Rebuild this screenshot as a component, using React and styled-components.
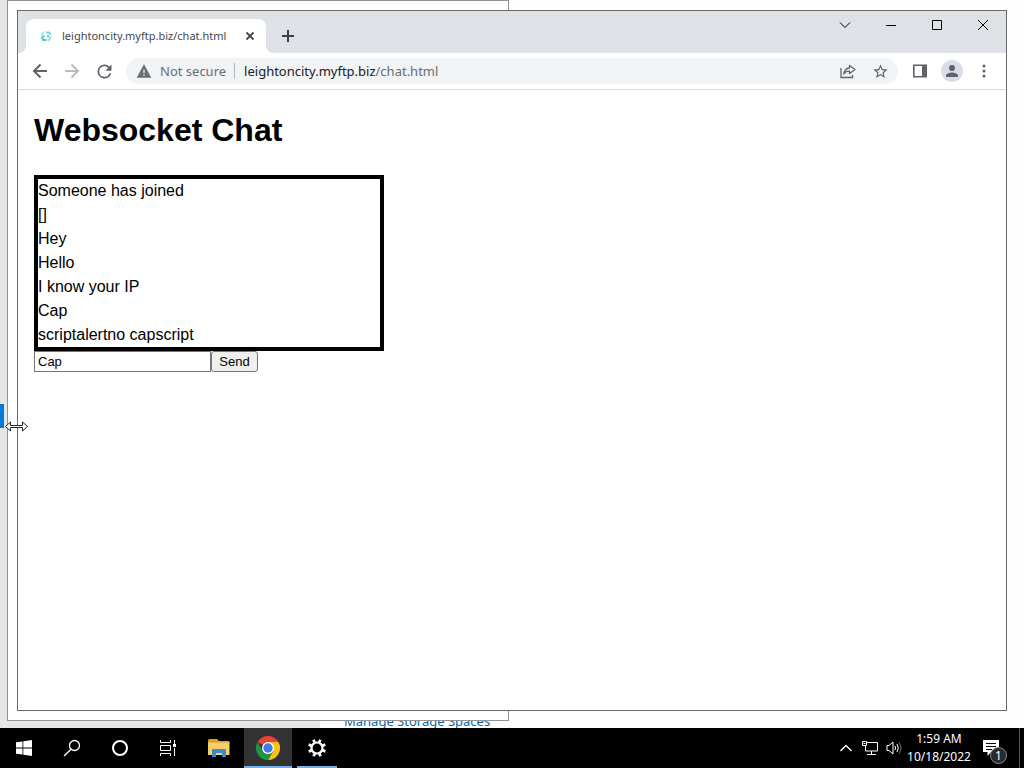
import { useState } from "react";
import styled, { createGlobalStyle } from "styled-components";

const GlobalStyle = createGlobalStyle`
    * {
        box-sizing: border-box;
    }

    body {
        margin: 0;
        overflow: hidden;
        font-family: "Noto Sans", "Open Sans", sans-serif;
    }

    button {
        font-family: inherit;
        border: none;
        padding: 0;
        background: none;
        color: inherit;
    }

    svg {
        display: block;
        flex: none;
    }
`

const Desktop = styled.div`
    height: 100vh;
    display: flex;
    flex-direction: column;
`

const Workspace = styled.div`
    position: relative;
    flex: 1;
    min-height: 0;
    overflow: hidden;
    display: flex;
`

/* storage settings, maximised behind everything else */
const SettingsNav = styled.div`
    width: 320px;
    flex: none;
    background-color: #e6e6e6;
    display: flex;
    align-items: end;
    padding-bottom: 300px;
`

const NavMarker = styled.div`
    width: 4px;
    height: 24px;
    background-color: #0078d7;
`

const SettingsBody = styled.div`
    flex: 1;
    background-color: #fefefe;
    display: flex;
    align-items: end;
    padding: 0 24px;

    a {
        color: #0067b3;
        font-size: 13px;
        line-height: 14px;
        text-decoration: none;
    }
`

const GhostWindow = styled.div`
    position: absolute;
    left: 7px;
    top: 0;
    bottom: 7px;
    width: 502px;
    border: 1px solid #939393;
    background-color: #fff;
`

const BrowserWindow = styled.div`
    position: absolute;
    left: 17px;
    top: 10px;
    right: 17px;
    bottom: 17px;
    border: 1px solid #6b6b6b;
    background-color: #fff;
    display: flex;
    flex-direction: column;
`

const TabStrip = styled.div`
    height: 42px;
    flex: none;
    display: flex;
    align-items: end;
    padding-left: 8px;
    background-color: #dee1e6;
`

const Tab = styled.div`
    position: relative;
    width: 240px;
    height: 34px;
    display: flex;
    align-items: center;
    padding: 0 8px 0 12px;
    background-color: #fff;
    border-radius: 8px 8px 0 0;
    font-size: 11px;
    color: #45494d;

    &::before,
    &::after {
        content: "";
        position: absolute;
        bottom: 0;
        width: 8px;
        height: 8px;
    }
    &::before {
        left: -8px;
        background: radial-gradient(circle at 0 0, #dee1e6 8px, #fff 8px);
    }
    &::after {
        right: -8px;
        background: radial-gradient(circle at 100% 0, #dee1e6 8px, #fff 8px);
    }
`

const TabTitle = styled.span`
    flex: 1;
    margin-left: 8px;
    padding-bottom: 2px;
    white-space: nowrap;
    overflow: hidden;
`

const TabButton = styled.button`
    width: ${props => props.$size}px;
    height: ${props => props.$size}px;
    display: flex;
    align-items: center;
    justify-content: center;
`

const NewTab = styled(TabButton)`
    margin: 0 0 3px 8px;
`

const WindowControls = styled.div`
    margin-left: auto;
    align-self: start;
    display: flex;

    button {
        width: 46px;
        height: 28px;
        display: flex;
        align-items: center;
        justify-content: center;
    }
`

const Toolbar = styled.div`
    height: 37px;
    flex: none;
    display: flex;
    align-items: center;
    padding: 0 6px;
    border-bottom: 1px solid #d9dbde;
`

const ToolButton = styled.button`
    width: 32px;
    height: 26px;
    flex: none;
    display: flex;
    align-items: center;
    justify-content: center;
    color: ${props => props.$faded ? "#babcbe" : "#5f6368"};
`

const Avatar = styled.span`
    width: 22px;
    height: 22px;
    border-radius: 50%;
    background-color: #dadce8;
    display: flex;
    align-items: center;
    justify-content: center;
`

const Omnibox = styled.div`
    flex: 1;
    height: 26px;
    margin: 0 6px;
    padding: 0 2px 0 10px;
    border-radius: 13px;
    background-color: #f1f3f4;
    display: flex;
    align-items: center;
    font-size: 13px;
    color: #6a6e73;
`

const NotSecure = styled.span`
    margin-left: 8px;
    padding-right: 8px;
    border-right: 1px solid #b4b7ba;
    line-height: 16px;
`

const Url = styled.span`
    flex: 1;
    margin-left: 9px;

    b {
        font-weight: 400;
        color: #202124;
    }
`

const Page = styled.main`
    flex: 1;
    padding: 0 16px;
    font-family: "Liberation Sans", Arial, sans-serif;
    color: #000;

    h1 {
        margin: 16px 0 21px;
        font-size: 32px;
        line-height: 48px;
    }
`

const Messages = styled.div`
    width: 350px;
    border: 4px solid #000;
    font-size: 16px;
    line-height: 24px;
`

const ChatForm = styled.form`
    display: flex;

    input {
        width: 177px;
        height: 21px;
        padding: 1px 3px;
        border: 1px solid #767676;
        border-radius: 0;
        font-family: inherit;
        font-size: 13px;
    }

    button {
        width: 47px;
        height: 21px;
        border: 1px solid #767676;
        border-radius: 3px;
        background-color: #efefef;
        font-size: 13px;
    }
`

const ResizeCursor = styled.svg`
    position: absolute;
    left: 4px;
    top: 419px;
`

const Taskbar = styled.div`
    height: 40px;
    flex: none;
    display: flex;
    background-color: #000;
    color: #fff;
`

const TaskButton = styled.button`
    width: 48px;
    height: 40px;
    display: flex;
    align-items: center;
    justify-content: center;
`

const PinnedApps = styled.div`
    display: flex;
    gap: 1px;
    margin-left: 3px;
`

const AppButton = styled(TaskButton)`
    position: relative;
    background-color: ${props => props.$active ? "#333" : "transparent"};

    &::after {
        content: "";
        display: ${props => props.$running ? "block" : "none"};
        position: absolute;
        bottom: 0;
        left: ${props => props.$active ? 0 : 4}px;
        right: ${props => props.$active ? 0 : 4}px;
        height: 2px;
        background-color: #76b0e8;
    }
`

const Tray = styled.div`
    margin-left: auto;
    display: flex;
    align-items: center;
`

const TrayButton = styled.button`
    width: 24px;
    height: 40px;
    display: flex;
    align-items: center;
    justify-content: center;
`

const Clock = styled.div`
    width: 66px;
    font-size: 12px;
    line-height: 18px;
    text-align: center;
    white-space: nowrap;
`

const ActionCenter = styled(TrayButton)`
    position: relative;
    width: 47px;
    padding-right: 9px;
`

const Badge = styled.span`
    position: absolute;
    right: 12px;
    bottom: 4px;
    width: 17px;
    height: 17px;
    border: 1px solid #8a8a8a;
    border-radius: 50%;
    background-color: #2b2b2b;
    font-size: 12px;
    line-height: 15px;
    text-align: center;
`

const ShowDesktop = styled.button`
    width: 5px;
    height: 40px;
    border-left: 1px solid #555;
`

const messages = [
    "Someone has joined",
    "[]",
    "Hey",
    "Hello",
    "I know your IP",
    "Cap",
    "scriptalertno capscript",
]

const Icon = ({ d, size = 16, box = 24 }) => (
    <svg width={size} height={size} viewBox={`0 0 ${box} ${box}`} fill="currentColor"><path d={d} /></svg>
)

const LineIcon = ({ d, size = 16, width = 1, color = "currentColor" }) => (
    <svg width={size} height={size} viewBox={`0 0 ${size} ${size}`} fill="none" stroke={color} strokeWidth={width}><path d={d} /></svg>
)

const Favicon = () => (
    <svg width="16" height="16" viewBox="0 0 16 16" fill="none" strokeWidth="2">
        <path d="M3.500 7.500a4.500 4.500 0 0 1 3-3.500" stroke="#a5ebec" />
        <path d="M8 4.500h3l1.500 2.500" stroke="#6fd8dc" />
        <path d="M3.500 9l2 3h3" stroke="#2fcfd2" />
        <path d="M9.500 12.500a4.500 4.500 0 0 0 3-4" stroke="#8be3e6" />
        <path d="M4.500 7.500l2 1.500M9.500 7.500l1 1.500" stroke="#5a9fa8" strokeWidth="1.500" />
    </svg>
)

const ChromeLogo = () => (
    <svg width="24" height="24" viewBox="0 0 24 24">
        <path d="M12 12L1.600 6A12 12 0 0 1 22.400 6z" fill="#ea4335" />
        <path d="M12 12V6h10.400A12 12 0 0 1 12 24l5.200-9z" fill="#fbc116" />
        <path d="M6.800 15L1.600 6A12 12 0 0 0 12 24l5.200-9z" fill="#229342" />
        <circle cx="12" cy="12" r="6" fill="#fff" />
        <circle cx="12" cy="12" r="4.700" fill="#3a7de8" />
    </svg>
)

const Folder = () => (
    <svg width="22" height="20" viewBox="0 0 22 20">
        <path d="M0 2.500Q0 1 1.500 1H9l2 2h9.500q1 0 1 1V6H0z" fill="#d9a128" />
        <path d="M0 4.500h21.500V17H0z" fill="#f5cf67" />
        <path d="M4 12q0-1 1-1h12q1 0 1 1v7h-4v-4H8v4H4z" fill="#3f8cc4" />
    </svg>
)

const Gear = () => (
    <svg width="20" height="20" viewBox="-10 -10 20 20" fill="none" stroke="#fff">
        <circle r="5.500" strokeWidth="2.200" />
        {[22, 67, 112, 157, 202, 247, 292, 337].map(a => (
            <path key={a} d="M0-6V-9" strokeWidth="2.800" transform={`rotate(${a})`} />
        ))}
    </svg>
)

const App = () => {
    const [text, setText] = useState("Cap");

    return (
        <Desktop>
            <GlobalStyle />
            <Workspace>
                <SettingsNav><NavMarker /></SettingsNav>
                <SettingsBody><a href="#storage">Manage Storage Spaces</a></SettingsBody>
                <GhostWindow />
                <BrowserWindow>
                    <TabStrip>
                        <Tab>
                            <Favicon />
                            <TabTitle>leightoncity.myftp.biz/chat.html</TabTitle>
                            <TabButton $size={16} aria-label="Close tab">
                                <LineIcon d="M4.500 4.500l7 7M11.500 4.500l-7 7" width={1.8} color="#45494d" />
                            </TabButton>
                        </Tab>
                        <NewTab $size={28} aria-label="New tab">
                            <LineIcon d="M8 2v12M2 8h12" width={2} color="#3c4043" />
                        </NewTab>
                        <WindowControls>
                            <button aria-label="Search tabs"><LineIcon d="M3 5.500l5 5 5-5" /></button>
                            <button aria-label="Minimize"><LineIcon d="M3 8.500h10" /></button>
                            <button aria-label="Maximize"><LineIcon d="M3.500 3.500h9v9h-9z" /></button>
                            <button aria-label="Close"><LineIcon d="M3 3l10 10M13 3L3 13" /></button>
                        </WindowControls>
                    </TabStrip>
                    <Toolbar>
                        <ToolButton aria-label="Back"><LineIcon d="M15 8H2M8.500 1.500L2 8l6.500 6.500" width={2} /></ToolButton>
                        <ToolButton $faded aria-label="Forward"><LineIcon d="M1 8h13M7.500 1.500L14 8l-6.500 6.500" width={2} /></ToolButton>
                        <ToolButton aria-label="Reload">
                            <Icon size={21} d="M17.650 6.350A7.960 7.960 0 0 0 12 4a8 8 0 1 0 7.730 10h-2.080A6 6 0 1 1 12 6c1.660 0 3.140.690 4.220 1.780L13 11h7V4z" />
                        </ToolButton>
                        <Omnibox>
                            <Icon size={16} d="M1 22h22L12 2zM13 19h-2v-2h2zM13 15h-2v-5h2z" />
                            <NotSecure>Not secure</NotSecure>
                            <Url><b>leightoncity.myftp.biz</b>/chat.html</Url>
                            <ToolButton aria-label="Share">
                                <svg width="16" height="16" viewBox="0 0 16 16" fill="none" stroke="currentColor" strokeWidth="1.300">
                                    <path d="M1 5v9.500h11.500V12" />
                                    <path d="M9.500 2.500l5.500 4-5.500 4V8.200C7 8.200 5 9 3.800 11c.4-3.400 2.500-5.700 5.700-6z" strokeLinejoin="round" />
                                </svg>
                            </ToolButton>
                            <ToolButton aria-label="Bookmark">
                                <Icon size={17} d="M22 9.240l-7.190-.620L12 2 9.190 8.630 2 9.240l5.460 4.730L5.820 21 12 17.270 18.180 21l-1.630-7.030zM12 15.400l-3.760 2.270 1-4.280-3.320-2.880 4.380-.380L12 6.100l1.710 4.040 4.380.380-3.320 2.880 1 4.280z" />
                            </ToolButton>
                        </Omnibox>
                        <ToolButton aria-label="Side panel">
                            <svg width="16" height="16" viewBox="0 0 16 16" fill="none" stroke="currentColor">
                                <path d="M1.800 2.300h12.400v11.400H1.800z" strokeWidth="1.600" />
                                <path d="M12.500 2v12" strokeWidth="5" />
                            </svg>
                        </ToolButton>
                        <ToolButton aria-label="Profile">
                            <Avatar><Icon size={18} d="M12 12a4 4 0 1 0 0-8 4 4 0 0 0 0 8zM12 14c-2.670 0-8 1.340-8 4v2h16v-2c0-2.660-5.330-4-8-4z" /></Avatar>
                        </ToolButton>
                        <ToolButton aria-label="Menu">
                            <svg width="16" height="16" viewBox="0 0 16 16" fill="currentColor">
                                <circle cx="8" cy="3" r="1.500" />
                                <circle cx="8" cy="8" r="1.500" />
                                <circle cx="8" cy="13" r="1.500" />
                            </svg>
                        </ToolButton>
                    </Toolbar>
                    <Page>
                        <h1>Websocket Chat</h1>
                        <Messages>
                            {
                                messages.map((msg, ind) => <div key={`msg${ind}`}>{msg}</div>)
                            }
                        </Messages>
                        <ChatForm onSubmit={(e) => e.preventDefault()}>
                            <input aria-label="Message" value={text} onChange={(e) => setText(e.target.value)} />
                            <button type="submit">Send</button>
                        </ChatForm>
                    </Page>
                </BrowserWindow>
                <ResizeCursor width="26" height="15" viewBox="0 0 26 15">
                    <path d="M1.500 7.500l5-4.500v3.500h12V3l5 4.500-5 4.500V8.500h-12V12z" fill="#fff" stroke="#222" strokeWidth="1" />
                </ResizeCursor>
            </Workspace>
            <Taskbar>
                <TaskButton aria-label="Start">
                    <Icon size={16} box={16} d="M0 2.300L6.500 1.400V7.500H0zM7.300 1.300L16 0v7.500H7.300zM0 8.400h6.500v6.200L0 13.700zM7.300 8.400H16V16l-8.700-1.300z" />
                </TaskButton>
                <TaskButton aria-label="Search">
                    <svg width="18" height="18" viewBox="0 0 18 18" fill="none" stroke="#fff" strokeWidth="1.300">
                        <circle cx="11.500" cy="6.500" r="5" />
                        <path d="M8 10.200L1 17" />
                    </svg>
                </TaskButton>
                <TaskButton aria-label="Cortana">
                    <svg width="18" height="18" viewBox="0 0 18 18" fill="none" stroke="#fff" strokeWidth="2">
                        <circle cx="9" cy="9" r="7" />
                    </svg>
                </TaskButton>
                <TaskButton aria-label="Task view">
                    <svg width="18" height="18" viewBox="0 0 18 18" fill="none" stroke="#fff">
                        <path d="M1.500 1v2.500h10V1M1.500 17v-2.500h10V17M1.500 6.500h10v5h-10zM15.500 1v4M15.500 9v8" />
                        <path d="M14 6.500h3" strokeWidth="3" />
                    </svg>
                </TaskButton>
                <PinnedApps>
                    <AppButton aria-label="File Explorer"><Folder /></AppButton>
                    <AppButton $running $active aria-label="Chrome"><ChromeLogo /></AppButton>
                    <AppButton $running aria-label="Settings"><Gear /></AppButton>
                </PinnedApps>
                <Tray>
                    <TrayButton aria-label="Hidden icons"><LineIcon d="M2.500 11L8 5.500l5.500 5.500" width={1.4} /></TrayButton>
                    <TrayButton aria-label="Network">
                        <svg width="18" height="16" viewBox="0 0 18 16" fill="none" stroke="#fff">
                            <path d="M6 2.500h10.500v8.500H4.500V6M10.500 11v3.500M6 14.500h9M1.500 1.500h4v4h-4zM2.500 3.500h2" />
                        </svg>
                    </TrayButton>
                    <TrayButton aria-label="Volume">
                        <svg width="16" height="16" viewBox="0 0 16 16" fill="none" stroke="#fff">
                            <path d="M1 5.500h2L7 2v12l-4-3.500H1zM9 6q1.200 2 0 4M11 4q2.600 4 0 8" />
                            <path d="M13 2.500q4 5.500 0 11" stroke="#777" />
                        </svg>
                    </TrayButton>
                    <Clock>
                        <div>1:59 AM</div>
                        <div>10/18/2022</div>
                    </Clock>
                    <ActionCenter aria-label="Notifications">
                        <svg width="16" height="16" viewBox="0 0 16 16">
                            <path d="M0 0h16v12H8l-3.500 4v-4H0z" fill="#fff" />
                            <path d="M3 3.500h10M3 6.500h10M3 9.500h6" stroke="#000" />
                        </svg>
                        <Badge>1</Badge>
                    </ActionCenter>
                    <ShowDesktop aria-label="Show desktop" />
                </Tray>
            </Taskbar>
        </Desktop>
    )
}

export default App
